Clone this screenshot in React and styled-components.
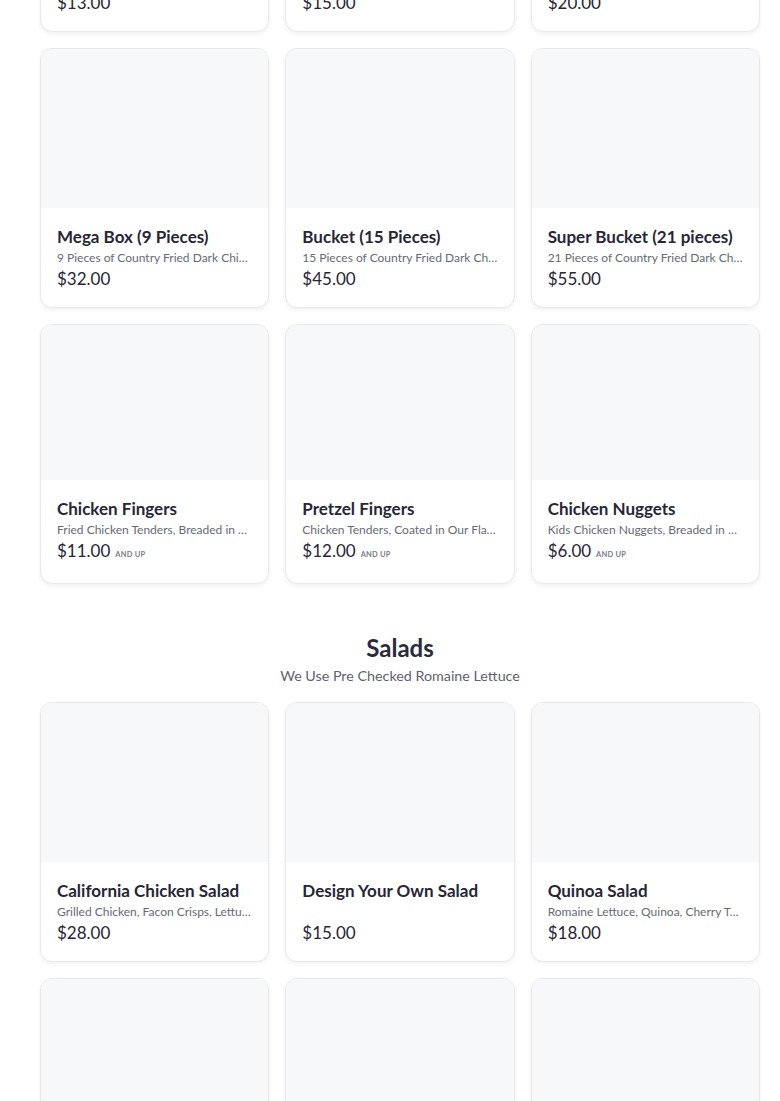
import styled, { createGlobalStyle } from 'styled-components';

const GlobalStyle = createGlobalStyle`
  html, body {
    margin: 0;
    padding: 0;
    background: #ffffff;
    font-family: Lato, "Noto Sans", sans-serif;
    color: #262636;
  }
  * {
    box-sizing: border-box;
  }
`;

// page is scrolled: first row of the chicken section is partly off screen
const Page = styled.div`
  padding: 0 20px 0 40px;
  margin-top: -228px;
`;

const Section = styled.section`
  display: flex;
  flex-direction: column;
`;

const SectionHead = styled.div`
  margin: 48px 0 16px;
  text-align: center;
  h2 {
    margin: 0;
    font-size: 24px;
    line-height: 32px;
    font-weight: 700;
    color: #2a2a3c;
  }
  p {
    margin: 2px 0 0;
    font-size: 14.3px;
    line-height: 20px;
    color: #5f6270;
  }
`;

const Grid = styled.div`
  display: grid;
  grid-template-columns: repeat(3, 1fr);
  gap: 16px;
`;

const Card = styled.div`
  background: #ffffff;
  border: 1px solid #e7e8ec;
  border-radius: 12px;
  overflow: hidden;
  box-shadow: 0 2px 4px rgba(20, 20, 40, 0.06);
  display: flex;
  flex-direction: column;
  height: 260px;
`;

const Thumb = styled.div`
  height: 159px;
  background: #f7f8fa;
`;

const Body = styled.div`
  padding: 17px 16px 16px;
  display: flex;
  flex-direction: column;
`;

const Title = styled.div`
  font-size: 17px;
  line-height: 24px;
  font-weight: 700;
  color: #262636;
  white-space: nowrap;
  overflow: hidden;
  text-overflow: ellipsis;
`;

const Desc = styled.div`
  font-size: 12px;
  line-height: 18px;
  height: 18px;
  color: #666a76;
  white-space: nowrap;
  overflow: hidden;
  text-overflow: ellipsis;
`;

const Price = styled.div`
  font-size: 17px;
  line-height: 24px;
  color: #262636;
  display: flex;
  align-items: baseline;
  gap: 5px;
`;

const AndUp = styled.span`
  font-size: 7.5px;
  font-weight: 700;
  letter-spacing: 0.2px;
  color: #7a7d88;
  text-transform: uppercase;
`;

const chicken = [
  { name: 'Box (3 Pieces)', desc: '3 Pieces of Country Fried Dark Chicken', price: '$13.00' },
  { name: 'Box (5 Pieces)', desc: '5 Pieces of Country Fried Dark Chicken', price: '$15.00' },
  { name: 'Box (7 Pieces)', desc: '7 Pieces of Country Fried Dark Chicken', price: '$20.00' },
  { name: 'Mega Box (9 Pieces)', desc: '9 Pieces of Country Fried Dark Chicken', price: '$32.00' },
  { name: 'Bucket (15 Pieces)', desc: '15 Pieces of Country Fried Dark Chicken', price: '$45.00' },
  { name: 'Super Bucket (21 pieces)', desc: '21 Pieces of Country Fried Dark Chicken', price: '$55.00' },
  { name: 'Chicken Fingers', desc: 'Fried Chicken Tenders, Breaded in Our Flour', price: '$11.00', andUp: true },
  { name: 'Pretzel Fingers', desc: 'Chicken Tenders, Coated in Our Flavorful Pretzel', price: '$12.00', andUp: true },
  { name: 'Chicken Nuggets', desc: 'Kids Chicken Nuggets, Breaded in Flour', price: '$6.00', andUp: true },
];

const salads = [
  { name: 'California Chicken Salad', desc: 'Grilled Chicken, Facon Crisps, Lettuce, Tomato', price: '$28.00' },
  { name: 'Design Your Own Salad', desc: '', price: '$15.00' },
  { name: 'Quinoa Salad', desc: 'Romaine Lettuce, Quinoa, Cherry Tomatoes', price: '$18.00' },
  { name: 'Garden Salad', desc: 'Romaine Lettuce, Cucumber, Tomato', price: '$12.00' },
  { name: 'Caesar Salad', desc: 'Romaine Lettuce, Parmesan, Croutons', price: '$14.00' },
  { name: 'Greek Salad', desc: 'Romaine Lettuce, Feta, Olives', price: '$16.00' },
];

const MenuCard = ({ item }) => (
  <Card>
    <Thumb />
    <Body>
      <Title>{item.name}</Title>
      <Desc>{item.desc}</Desc>
      <Price>
        {item.price}
        {item.andUp && <AndUp>and up</AndUp>}
      </Price>
    </Body>
  </Card>
);

export default function App() {
  return (
    <>
      <GlobalStyle />
      <Page>
        <Section>
          <Grid>
            {chicken.map((item) => (
              <MenuCard key={item.name} item={item} />
            ))}
          </Grid>
        </Section>
        <Section>
          <SectionHead>
            <h2>Salads</h2>
            <p>We Use Pre Checked Romaine Lettuce</p>
          </SectionHead>
          <Grid>
            {salads.map((item) => (
              <MenuCard key={item.name} item={item} />
            ))}
          </Grid>
        </Section>
      </Page>
    </>
  );
}
